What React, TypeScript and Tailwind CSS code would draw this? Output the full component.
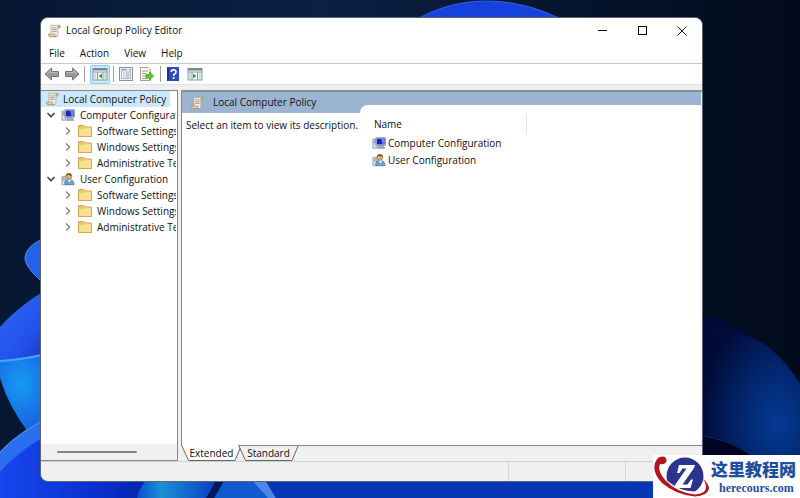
import React, { useState } from "react";
import clsx from "clsx";

type IconProps = { className?: string };

type TreeItem = {
  label: string;
  icon: React.FC<IconProps>;
  children?: string[];
};

const Wallpaper = () => (
  <svg
    className="absolute inset-0 h-full w-full"
    viewBox="0 0 800 498"
    preserveAspectRatio="xMidYMid slice"
    aria-hidden="true"
  >
    <defs>
      <linearGradient id="sky" x1="0" y1="0" x2="1" y2="0">
        <stop offset="0" stopColor="#061733" />
        <stop offset="0.4" stopColor="#0a2044" />
        <stop offset="0.75" stopColor="#04132b" />
        <stop offset="1" stopColor="#020b1a" />
      </linearGradient>
      <linearGradient id="petal" x1="0" y1="0" x2="1" y2="1">
        <stop offset="0" stopColor="#2f6cf4" />
        <stop offset="0.6" stopColor="#2450ee" />
        <stop offset="1" stopColor="#1a2c9c" />
      </linearGradient>
      <radialGradient id="cyan" cx="0.35" cy="0.4" r="0.7">
        <stop offset="0" stopColor="#179af5" />
        <stop offset="1" stopColor="#1659dd" />
      </radialGradient>
      <linearGradient id="corner" x1="0" y1="0" x2="1" y2="0">
        <stop offset="0" stopColor="#1746ee" />
        <stop offset="0.5" stopColor="#0a30cf" />
        <stop offset="1" stopColor="#041d8d" />
      </linearGradient>
      <radialGradient id="night" cx="0.8" cy="0.55" r="0.7">
        <stop offset="0" stopColor="#043a94" />
        <stop offset="0.5" stopColor="#03256c" />
        <stop offset="1" stopColor="#010b38" />
      </radialGradient>
      <linearGradient id="glow" x1="0" y1="0" x2="1" y2="0">
        <stop offset="0" stopColor="#0b4fd0" />
        <stop offset="0.3" stopColor="#1c8fd6" />
        <stop offset="1" stopColor="#0a3fc4" />
      </linearGradient>
    </defs>
    <rect width="800" height="498" fill="url(#sky)" />
    <path d="M400 30Q440 1 486 1Q535 1 580 30Z" fill="#1741dc" stroke="#2a62e6" />
    <path d="M60 235Q28 240 25 257Q24 270 60 296Z" fill="#2560e8" stroke="#4a94f5" />
    <path d="M0 327Q22 302 60 282V360H0Z" fill="url(#petal)" />
    <path d="M0 361Q22 360 60 351V420L28 432Q8 405 0 378Z" fill="url(#cyan)" />
    <path d="M0 361Q22 360 60 351" fill="none" stroke="#3fa9f5" strokeWidth="2" />
    <path d="M0 452Q20 430 60 412V498H0Z" fill="#2a6ff0" />
    <path d="M0 472Q20 448 60 428V498H0Z" fill="#1746ee" />
    <path d="M0 452Q20 430 60 412" fill="none" stroke="#4fa0f7" />
    <path d="M0 472L40 440V478H190V498H0Z" fill="url(#corner)" />
    <path d="M137 498Q140 486 148 478H216Q212 490 206 498Z" fill="url(#glow)" />
    <path d="M214 498L222 478H264L276 498Z" fill="#1159cf" />
    <path d="M250 478H264L276 498H268Z" fill="#4b86e8" />
    <path d="M276 498L264 478H700V498Z" fill="#0737b4" />
    <path d="M206 498L218 478H226L214 498Z" fill="#051a5c" />
    <path d="M690 312Q725 318 755 337Q785 358 800 383V498H690Z" fill="#020a38" />
    <path d="M690 332Q745 328 770 348Q790 366 800 384V498H690Z" fill="url(#night)" />
    <path d="M690 434Q730 438 752 456H690Z" fill="#010522" stroke="#0b2868" />
  </svg>
);

const ScrollIcon = ({ className }: IconProps) => (
  <svg className={clsx("shrink-0", className)} viewBox="0 0 16 16" aria-hidden="true">
    <path d="M4.5 1.5H14Q12.500 2.500 12.500 4.500V12Q12.500 14.500 10.500 14.500H3Q4.500 13.500 4.500 11.500Z" fill="#f6efdc" stroke="#a79c86" strokeWidth="0.8" />
    <path d="M1.500 11.500H9V13Q9.200 14.500 10.500 14.500H3.500Q1.500 14.200 1.500 11.500Z" fill="#e3cfa0" stroke="#a08b60" strokeWidth="0.8" />
    <path d="M12.500 4.500H15V3Q15 1.500 14 1.500Q12.500 2 12.500 4.500Z" fill="#d9c495" stroke="#a08b60" strokeWidth="0.8" />
    <path d="M6 4.500H11M6 6.500H11M6 8.500H11" stroke="#8e8b86" strokeWidth="0.9" />
  </svg>
);

const ComputerIcon = ({ className }: IconProps) => (
  <svg className={clsx("shrink-0", className)} viewBox="0 0 16 16" aria-hidden="true">
    <path d="M1 3.500H5V14H1Z" fill="#d5dbe8" stroke="#7b86a0" strokeWidth="0.8" />
    <path d="M2 5.500H4M2 7.500H4" stroke="#5c6886" />
    <rect x="4.500" y="2" width="11" height="8.500" fill="#c9d2e6" stroke="#7684a8" strokeWidth="0.8" />
    <rect x="5.500" y="3" width="9" height="6.500" fill="#1626bd" />
    <path d="M10.500 3H14.500V9.500H12Z" fill="#6d86e2" />
    <path d="M8 10.500H12L14.500 14H6Z" fill="#a8b2ca" stroke="#6c7893" strokeWidth="0.8" />
  </svg>
);

const UserIcon = ({ className }: IconProps) => (
  <svg className={clsx("shrink-0", className)} viewBox="0 0 16 16" aria-hidden="true">
    <path d="M1 5H5V14.500H1Z" fill="#dce3ea" stroke="#7d8997" strokeWidth="0.8" />
    <path d="M2 7H4M2 9H4" stroke="#687686" />
    <path d="M4.500 14.500Q3.500 8.500 9 8Q14.500 8.500 15 14.500Z" fill="#6ba3cf" stroke="#3b6e9b" strokeWidth="0.8" />
    <path d="M7.500 8L9.500 12L12 8.500Z" fill="#eef5fb" />
    <circle cx="9" cy="5" r="3.300" fill="#ddb273" stroke="#8c6532" strokeWidth="0.7" />
    <path d="M5.500 5Q5 1 9 1Q12.500 1.200 12.400 4.500Q9 4.500 8 3Q7 4.500 5.500 5Z" fill="#94662f" />
  </svg>
);

const FolderIcon = ({ className }: IconProps) => (
  <svg className={clsx("shrink-0", className)} viewBox="0 0 14 12" aria-hidden="true">
    <path d="M0.500 0.500H6L7.500 2H13.500V11.500H0.500Z" fill="#edc968" stroke="#d3a94c" />
    <path d="M1 4H6.500L8 2.800H13V11H1Z" fill="#fbdf91" />
  </svg>
);

const ArrowIcon = ({ className }: IconProps) => (
  <svg className={className} viewBox="0 0 16 14" aria-hidden="true">
    <path d="M1 7L7.500 1V4.500H14.500V9.500H7.500V13Z" fill="#9a9a9a" stroke="#777" strokeLinejoin="round" />
    <path d="M3 6.800L6.500 3.500V5.500H13.500" fill="none" stroke="#bdbdbd" />
  </svg>
);

const PaneIcon = ({ className }: IconProps) => (
  <svg className={className} viewBox="0 0 16 14" aria-hidden="true">
    <rect x="1" y="1.500" width="14" height="11.500" fill="#fafcfd" stroke="#8794a0" />
    <path d="M1 2.500H15" stroke="#75828f" strokeWidth="2" />
    <path d="M1 5H15M5.500 5V13M11 5V13" stroke="#8f9ba6" />
    <path d="M2.300 7H4.300M2.300 9H4.300M2.300 11H4.300M12.200 7H14M12.200 9H14M12.200 11H14" stroke="#8f9ba6" strokeWidth="0.8" />
    <path d="M10 6.500V11.500L6.500 9Z" fill="#3aa81f" />
  </svg>
);

const PropertiesIcon = ({ className }: IconProps) => (
  <svg className={className} viewBox="0 0 14 14" aria-hidden="true">
    <rect x="0.500" y="0.500" width="13" height="13" fill="#f3f6f9" stroke="#8593a2" />
    <rect x="2.500" y="4" width="9" height="7.500" fill="#fff" stroke="#9ba8b5" strokeWidth="0.8" />
    <path d="M2 2.500H8M10 2.500H12" stroke="#8b99a9" />
    <path d="M4 6H5.500M6.500 6H10.500M4 8H5.500M6.500 8H10.500M4 10H5.500M6.500 10H10.500" stroke="#7f8d9b" strokeWidth="0.9" />
  </svg>
);

const ExportIcon = ({ className }: IconProps) => (
  <svg className={className} viewBox="0 0 14 14" aria-hidden="true">
    <path d="M0.500 0.500H8L10.500 3V13.500H0.500Z" fill="#fbf9ea" stroke="#a9a283" />
    <path d="M2 4H8.500M2 6.500H6M2 9H6M2 11.500H8.500" stroke="#a09b86" />
    <path d="M6 7.500H9.500V5L13.700 9L9.500 13V10.500H6Z" fill="#56cc28" stroke="#38a012" strokeWidth="0.7" />
  </svg>
);

const HelpIcon = ({ className }: IconProps) => (
  <svg className={className} viewBox="0 0 12 14" aria-hidden="true">
    <rect width="12" height="14" fill="#2e4cba" />
    <path d="M1 0V14" stroke="#1d3390" strokeWidth="2" />
    <path d="M4.300 5Q4.200 2.800 6.500 2.800Q9 2.900 9 4.900Q9 6.200 7.500 7Q6.700 7.500 6.700 9" fill="none" stroke="#fff" strokeWidth="1.600" />
    <circle cx="6.700" cy="11" r="1" fill="#fff" />
  </svg>
);

const LogoIcon = ({ className }: IconProps) => (
  <svg className={className} viewBox="0 0 58 43" aria-hidden="true">
    <circle cx="32" cy="21" r="18.500" fill="#2b3590" />
    <path d="M7 8Q2 18 13 28Q27 40 44 39Q54 38 53 30" fill="none" stroke="#fff" strokeWidth="5" />
    <path d="M12 2Q15 5 12.500 8Q10 10 7 9Q4 16 13 26Q25 38 42 39.500Q53 39 53 32Q53 28 50 24Q56 29 56 34Q54 41 42 41.500Q23 40 9 28Q-1 18 2 8Q5 0 12 2Z" fill="#b5161c" />
    <path d="M26 10H42L41 13L29.500 29.500H34.500L38 24.500H40L37.500 33H21L22 30L33.500 13.500H29.500L26.500 18H24Z" fill="#fff" />
  </svg>
);

const Chevron = ({ open }: { open: boolean }) => (
  <svg
    className={clsx("h-2 w-2 shrink-0", open ? "text-[#333]" : "-rotate-90 text-[#888]")}
    viewBox="0 0 8 8"
    fill="none"
    stroke="currentColor"
    strokeWidth="1.400"
    aria-hidden="true"
  >
    <path d="M0.500 2L4 5.700L7.500 2" />
  </svg>
);

const folders = ["Software Settings", "Windows Settings", "Administrative Templates"];

const tree: TreeItem[] = [
  { label: "Computer Configuration", icon: ComputerIcon, children: folders },
  { label: "User Configuration", icon: UserIcon, children: folders },
];

const menus = ["File", "Action", "View", "Help"];

const Separator = () => <span className="h-4 w-px bg-[#a0a0a0]" />;

const TitleBar = () => (
  <header className="flex h-[25px] items-center bg-white pl-1.5">
    <ScrollIcon className="h-3.5 w-3.5" />
    <h1 className="ml-[5px] flex-1 text-[10px]">Local Group Policy Editor</h1>
    <button className="flex h-full w-10 items-center justify-center" aria-label="Minimize">
      <span className="h-px w-[9px] bg-black" />
    </button>
    <button className="flex h-full w-10 items-center justify-center" aria-label="Maximize">
      <span className="h-[9px] w-[9px] border border-black" />
    </button>
    <button className="flex h-full w-10 items-center justify-center" aria-label="Close">
      <svg className="h-2.5 w-2.5" viewBox="0 0 10 10" stroke="#222" aria-hidden="true">
        <path d="M0.500 0.500L9.500 9.500M9.500 0.500L0.500 9.500" />
      </svg>
    </button>
  </header>
);

const Toolbar = () => (
  <div className="flex h-[21px] items-center border-b border-[#e4e4e4] bg-white pl-[3px]">
    <button aria-label="Back">
      <ArrowIcon className="h-3.5 w-4" />
    </button>
    <button className="mx-1" aria-label="Forward">
      <ArrowIcon className="h-3.5 w-4 -scale-x-100" />
    </button>
    <Separator />
    <button
      className="mr-[3px] ml-[5px] flex h-[19px] w-5 items-center justify-center rounded-xs border border-[#8ccbf5] bg-[#cce8fb]"
      aria-label="Show/Hide Console Tree"
      aria-pressed="true"
    >
      <PaneIcon className="h-3.5 w-4" />
    </button>
    <Separator />
    <button className="ml-[5px]" aria-label="Properties">
      <PropertiesIcon className="h-3.5 w-3.5" />
    </button>
    <button className="mr-1.5 ml-[7px]" aria-label="Export List">
      <ExportIcon className="h-3.5 w-3.5" />
    </button>
    <Separator />
    <button className="ml-1.5" aria-label="Help">
      <HelpIcon className="h-3.5 w-3" />
    </button>
    <button className="ml-2" aria-label="Show/Hide Action Pane">
      <PaneIcon className="h-3.5 w-4 -scale-x-100" />
    </button>
  </div>
);

const ConsoleTree = () => {
  const [closed, setClosed] = useState<string[]>([]);

  const toggle = (label: string) => {
    setClosed((prev) =>
      prev.includes(label) ? prev.filter((l) => l !== label) : [...prev, label]
    );
  };

  return (
    <nav className="flex w-[137px] shrink-0 flex-col border-t border-r border-b border-[#828790] bg-white">
      <div className="mr-px flex-1 overflow-hidden whitespace-nowrap text-[10px] leading-4">
        <button className="flex h-4 items-center bg-[#cce8ff] pr-1 pl-1">
          <ScrollIcon className="h-3.5 w-3.5" />
          <span className="ml-1">Local Computer Policy</span>
        </button>
        {tree.map(({ label, icon: Icon, children }) => {
          const open = !closed.includes(label);
          return (
            <div key={label}>
              <button
                className="flex h-4 items-center pl-1.5"
                aria-expanded={open}
                onClick={() => toggle(label)}
              >
                <Chevron open={open} />
                <Icon className="ml-1.5 h-3.5 w-3.5" />
                <span className="ml-[5px]">{label}</span>
              </button>
              {open &&
                children?.map((child) => (
                  <button key={child} className="flex h-4 items-center pl-[23px]">
                    <Chevron open={false} />
                    <FolderIcon className="ml-1.5 h-3 w-3.5" />
                    <span className="ml-[5px]">{child}</span>
                  </button>
                ))}
            </div>
          );
        })}
      </div>
      <div className="flex h-4 items-center bg-[#f0f0f0] pl-4">
        <div className="h-0.5 w-20 rounded-full bg-[#858585]" />
      </div>
    </nav>
  );
};

const ResultPane = () => (
  <div className="mr-px flex flex-1 border-l border-[#828790] bg-[#9ab4d1]">
    <section className="flex w-[178px] shrink-0 flex-col">
      <h2 className="flex h-[21px] items-center pl-2 text-[10px]">
        <ScrollIcon className="h-3.5 w-3.5" />
        <span className="ml-[9px]">Local Computer Policy</span>
      </h2>
      <p className="flex-1 bg-white pt-1 pl-1 text-[10px] leading-4 whitespace-nowrap">
        Select an item to view its description.
      </p>
    </section>
    <section className="flex flex-1 flex-col bg-[linear-gradient(#9ab4d1_21px,#fff_21px)] pt-[13px]">
      <div className="flex-1 rounded-tl-lg bg-white pl-3">
        <table className="w-[155px] text-left text-[10px] leading-4">
          <thead>
            <tr>
              <th className="h-[29px] p-0 align-bottom font-normal">
                <span className="flex h-5 items-center border-r border-[#e5e5e5] pl-0.5">Name</span>
              </th>
            </tr>
          </thead>
          <tbody>
            {tree.map(({ label, icon: Icon }) => (
              <tr key={label}>
                <td className="h-[17px] p-0 whitespace-nowrap">
                  <span className="flex items-center gap-0.5">
                    <Icon className="h-3.5 w-3.5" />
                    {label}
                  </span>
                </td>
              </tr>
            ))}
          </tbody>
        </table>
      </div>
    </section>
  </div>
);

const ViewTabs = () => {
  const [active, setActive] = useState("Extended");

  return (
    <div className="flex h-4 text-[10px] leading-4">
      <div className="flex" role="tablist">
        {["Extended", "Standard"].map((tab) => (
          <button
            key={tab}
            role="tab"
            aria-selected={active === tab}
            className="relative -mr-1 h-4 w-[61px]"
            onClick={() => setActive(tab)}
          >
            <svg
              className="absolute inset-0 h-full w-full"
              viewBox="0 0 61 16"
              preserveAspectRatio="none"
              aria-hidden="true"
            >
              <path
                d="M0.500 0L7.500 15.500H54L60.500 0"
                fill={active === tab ? "#fff" : "#f0f0f0"}
                stroke="#666"
              />
              {active !== tab && <path d="M0 0.500H61" stroke="#828790" />}
            </svg>
            <span className="relative">{tab}</span>
          </button>
        ))}
      </div>
      <span className="ml-1 flex-1 border-t border-[#828790]" />
    </div>
  );
};

const Watermark = () => (
  <div className="absolute right-0 bottom-0 flex h-[43px] w-[147px] bg-white">
    <LogoIcon className="h-[43px] w-[58px] shrink-0" />
    <div className="flex flex-col pt-0.5 whitespace-nowrap text-[#1d4f9e]">
      <span className="font-['Noto_Sans_CJK_SC',sans-serif] text-[17px] leading-6 font-black">
        这里教程网
      </span>
      <span className="pl-2 font-['Liberation_Serif',serif] text-[12px] leading-3.5 font-bold">
        herecours.com
      </span>
    </div>
  </div>
);

const App: React.FC = () => {
  return (
    <div className="relative flex min-h-screen overflow-hidden bg-[#061733] pt-[17px] pr-[97px] pb-4 pl-10 font-['Open_Sans','Noto_Sans',sans-serif] text-[#111]">
      <Wallpaper />
      <main className="relative flex flex-1 flex-col overflow-hidden rounded-lg border border-[#5c6470] bg-[#f0f0f0]">
        <TitleBar />
        <nav className="flex h-[21px] items-center gap-[15px] border-b border-[#c8c8c8] bg-white pl-2 text-[10px]">
          {menus.map((menu) => (
            <button key={menu}>{menu}</button>
          ))}
        </nav>
        <Toolbar />
        <div className="mt-[5px] flex flex-1">
          <ConsoleTree />
          <div className="ml-[3px] flex flex-1 flex-col">
            <div className="flex flex-1 border-t-2 border-[#829098]">
              <ResultPane />
            </div>
            <ViewTabs />
          </div>
        </div>
        <footer className="flex h-5 justify-end border-t border-[#d0d0d0]">
          <span className="w-[117px] border-l border-[#d8d8d8]" />
          <span className="w-[77px] border-l border-[#d8d8d8]" />
        </footer>
      </main>
      <Watermark />
    </div>
  );
};

export default App;
